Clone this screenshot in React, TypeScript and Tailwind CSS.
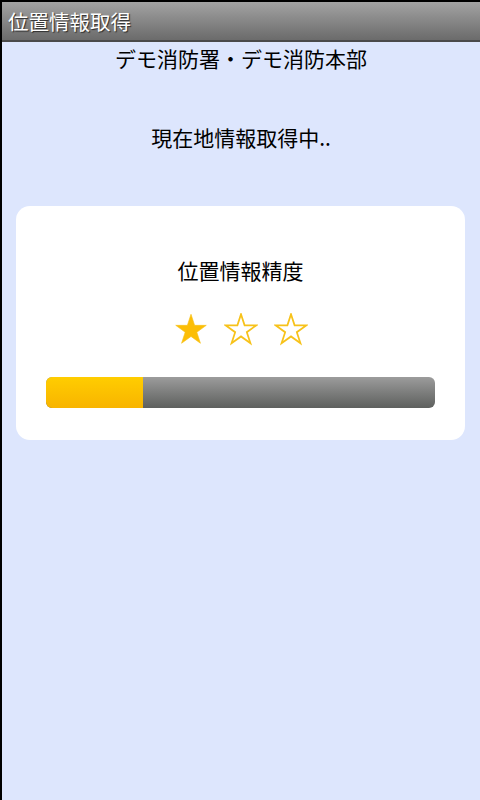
const jp = "font-['Droid_Sans_Fallback','Noto_Sans_CJK_JP',sans-serif]";

function Star({ filled }: { filled: boolean }) {
  return (
    <svg width="34" height="33" viewBox="-3 -3 106 101">
      <polygon
        points="50,0 61.23,34.55 97.55,34.55 68.16,55.9 79.39,90.45 50,69.1 20.61,90.45 31.84,55.9 2.45,34.55 38.77,34.55"
        fill={filled ? "#fcbe06" : "none"}
        stroke="#f7c21a"
        strokeWidth={filled ? 2 : 5.5}
        strokeLinejoin="miter"
      />
    </svg>
  );
}

export default function App() {
  const level = 1;
  const progress = 25;

  return (
    <div className={`min-h-screen w-full bg-[#dde6fd] border-l-2 border-black ${jp}`}>
      {/* Title bar */}
      <div className="h-[42px] border-t-2 border-b-2 border-t-black border-b-[#4a4a4a] bg-gradient-to-b from-[#a3a3a3] to-[#6b6b6b] flex items-center px-[6px]">
        <span className="text-white text-[20.5px] leading-none [text-shadow:1px_1px_1px_#2a2a2a]">
          位置情報取得
        </span>
      </div>

      {/* Station name */}
      <div className="mt-[2px] h-[28px] leading-[28px] text-center text-[21px] text-black">
        デモ消防署・デモ消防本部
      </div>

      {/* Status */}
      <div className="mt-[51px] h-[28px] leading-[28px] text-center text-[21px] text-black">
        現在地情報取得中..
      </div>

      {/* Accuracy card */}
      <div className="mt-[55px] ml-[14px] mr-[15px] bg-white rounded-[14px] pt-[50px] pb-[32px] px-[30px] flex flex-col items-center">
        <div className="h-[28px] leading-[28px] text-[21px] text-black">位置情報精度</div>
        <div className="mt-[29px] flex gap-[16px]">
          {[0, 1, 2].map((i) => (
            <Star key={i} filled={i < level} />
          ))}
        </div>
        <div className="mt-[31px] w-full h-[31px] rounded-[6px] overflow-hidden flex bg-gradient-to-b from-[#9c9c9c] to-[#5e605e]">
          <div
            className="h-full bg-gradient-to-b from-[#ffcd00] to-[#f8b400]"
            style={{ width: `${progress}%` }}
          />
        </div>
      </div>
    </div>
  );
}
